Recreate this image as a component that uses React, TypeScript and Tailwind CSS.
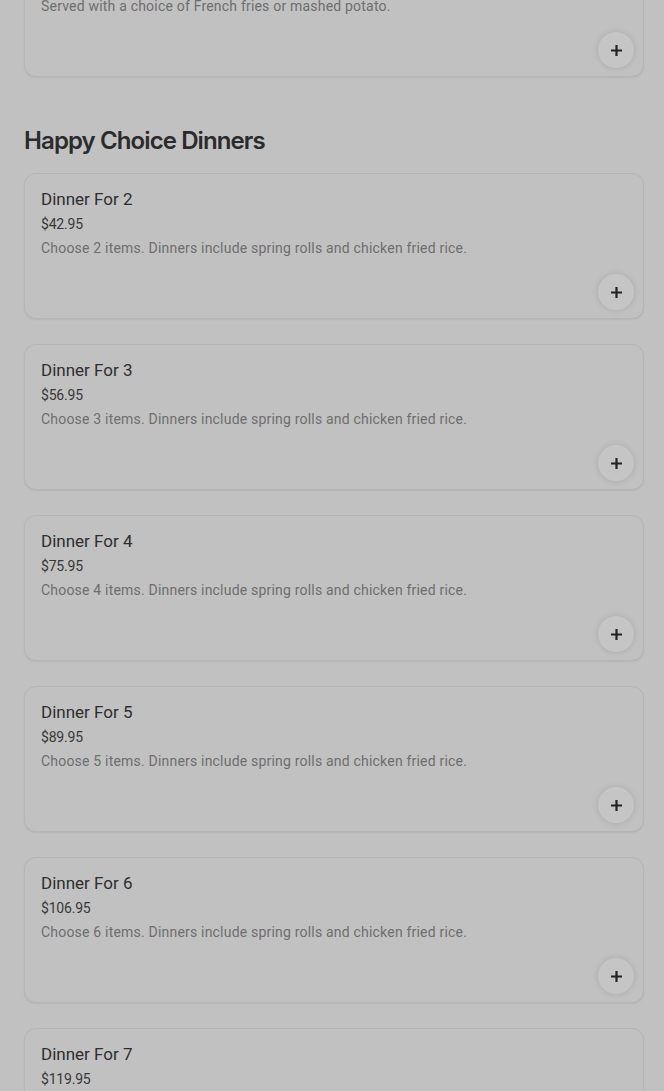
import React from "react";

const dinners = [
  { n: 2, price: "$42.95" },
  { n: 3, price: "$56.95" },
  { n: 4, price: "$75.95" },
  { n: 5, price: "$89.95" },
  { n: 6, price: "$106.95" },
  { n: 7, price: "$119.95" },
];

function PlusButton() {
  return (
    <button className="flex h-9 w-9 items-center justify-center rounded-full bg-[#c5c5c5] shadow-[0_0_6px_rgba(0,0,0,0.12)]">
      <svg width="13" height="13" viewBox="0 0 13 13" fill="none">
        <path d="M6.5 1v11M1 6.5h11" stroke="#222" strokeWidth="2.2" />
      </svg>
    </button>
  );
}

function Card({ title, price, desc }: { title: string; price: string; desc: string }) {
  return (
    <div className="flex flex-col rounded-xl border border-[#b5b5b5] bg-[#c1c1c1] pl-4 pr-[9px] pt-[13px] pb-2 shadow-[0_1px_2px_rgba(0,0,0,0.06)]">
      <div className="text-[17px] leading-6 text-[#2e2e2e]">{title}</div>
      <div className="mt-[3px] text-[14px] leading-5 tracking-[-0.2px] text-[#383838]">{price}</div>
      <div className="mt-1 text-[14px] leading-5 tracking-[0.2px] text-[#6e6e6e]">{desc}</div>
      <div className="mt-4 flex justify-end">
        <PlusButton />
      </div>
    </div>
  );
}

export default function App() {
  return (
    <div
      className="min-h-[1091px] overflow-hidden bg-[#c1c1c1] pl-6 pr-5"
      style={{ fontFamily: "Roboto, 'Liberation Sans', sans-serif" }}
    >
      <div className="-mt-[69px]">
        <Card
          title="Egg Foo Young"
          price="$14.95"
          desc="Served with a choice of French fries or mashed potato."
        />
      </div>
      <h2
        className="mt-12 text-[24px] font-semibold leading-8 tracking-[-0.9px] text-[#2b2b2b]"
        style={{ fontFamily: "Inter, 'Liberation Sans', sans-serif" }}
      >
        Happy Choice Dinners
      </h2>
      <div className="mt-4 flex flex-col gap-[25px]">
        {dinners.map((d) => (
          <Card
            key={d.n}
            title={`Dinner For ${d.n}`}
            price={d.price}
            desc={`Choose ${d.n} items. Dinners include spring rolls and chicken fried rice.`}
          />
        ))}
      </div>
    </div>
  );
}
